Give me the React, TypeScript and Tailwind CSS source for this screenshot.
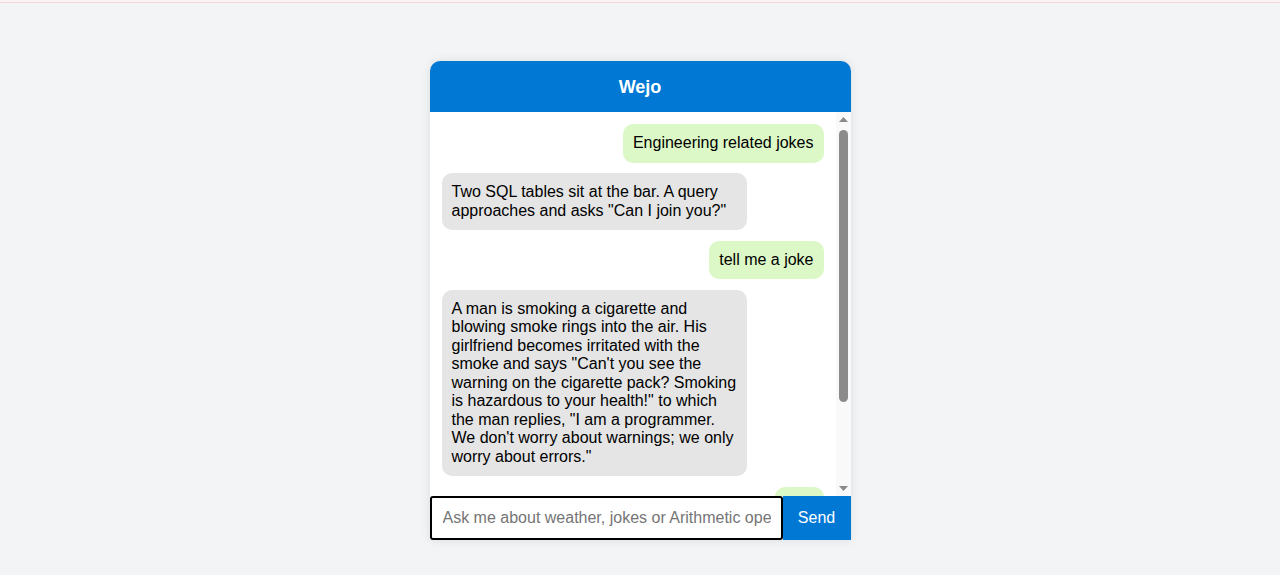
import React from "react";

const messages: { from: "user" | "bot"; text: string }[] = [
  { from: "user", text: "Engineering related jokes" },
  { from: "bot", text: 'Two SQL tables sit at the bar. A query approaches and asks "Can I join you?"' },
  { from: "user", text: "tell me a joke" },
  {
    from: "bot",
    text: 'A man is smoking a cigarette and blowing smoke rings into the air. His girlfriend becomes irritated with the smoke and says "Can\'t you see the warning on the cigarette pack? Smoking is hazardous to your health!" to which the man replies, "I am a programmer. We don\'t worry about warnings; we only worry about errors."',
  },
  { from: "user", text: "Hey" },
];

export default function App() {
  return (
    <div className="min-h-[575px] bg-[#f3f4f6]" style={{ fontFamily: '"Liberation Sans", Arial, sans-serif' }}>
      <div className="h-[3px] bg-[#fdf3f3] border-b border-[#f1d9d9]" />
      <div className="flex justify-center pt-[58px]">
        <div className="w-[421px] bg-white rounded-t-[10px] overflow-hidden shadow-[0_0_10px_rgba(0,0,0,0.1)] flex flex-col">
          <div className="h-[51px] bg-[#0078d4] flex items-center justify-center text-white font-bold text-[18px] pt-[1px]">
            Wejo
          </div>
          <div className="h-[384px] flex">
            <div className="flex-1 overflow-hidden px-[12px] pt-[12px] flex flex-col gap-[10.5px]">
              {messages.map((m, i) => (
                <div key={i} className={m.from === "user" ? "flex justify-end" : "flex justify-start"}>
                  <div
                    className={
                      (m.from === "user" ? "bg-[#dcf8c6]" : "bg-[#e5e5e5]") +
                      " max-w-[80%] rounded-[10px] px-[10px] py-[10px] text-[16px] leading-[18.5px] text-black"
                    }
                  >
                    {m.text}
                  </div>
                </div>
              ))}
            </div>
            <div className="w-[15px] bg-[#f9f9f9] flex flex-col items-center">
              <svg width="15" height="14" viewBox="0 0 15 14" className="shrink-0">
                <path d="M3 10 L7.5 5 L12 10 Z" fill="#8a8a8a" />
              </svg>
              <div className="w-[9px] h-[272px] mt-[4px] rounded-full bg-[#8b8b8b]" />
              <div className="flex-1" />
              <svg width="15" height="14" viewBox="0 0 15 14" className="shrink-0">
                <path d="M3 4 L7.5 9 L12 4 Z" fill="#8a8a8a" />
              </svg>
            </div>
          </div>
          <div className="flex h-[44px] bg-white">
            <input
              className="w-[353px] h-[44px] border-2 border-black rounded-[3px] pl-[11px] pr-[10px] text-[16px] text-black placeholder:text-[#757575] outline-none"
              placeholder="Ask me about weather, jokes or Arithmetic operations"
              style={{ fontFamily: '"Liberation Sans", Arial, sans-serif' }}
            />
            <button className="flex-1 bg-[#0078d4] text-white text-[16px]">Send</button>
          </div>
        </div>
      </div>
    </div>
  );
}
